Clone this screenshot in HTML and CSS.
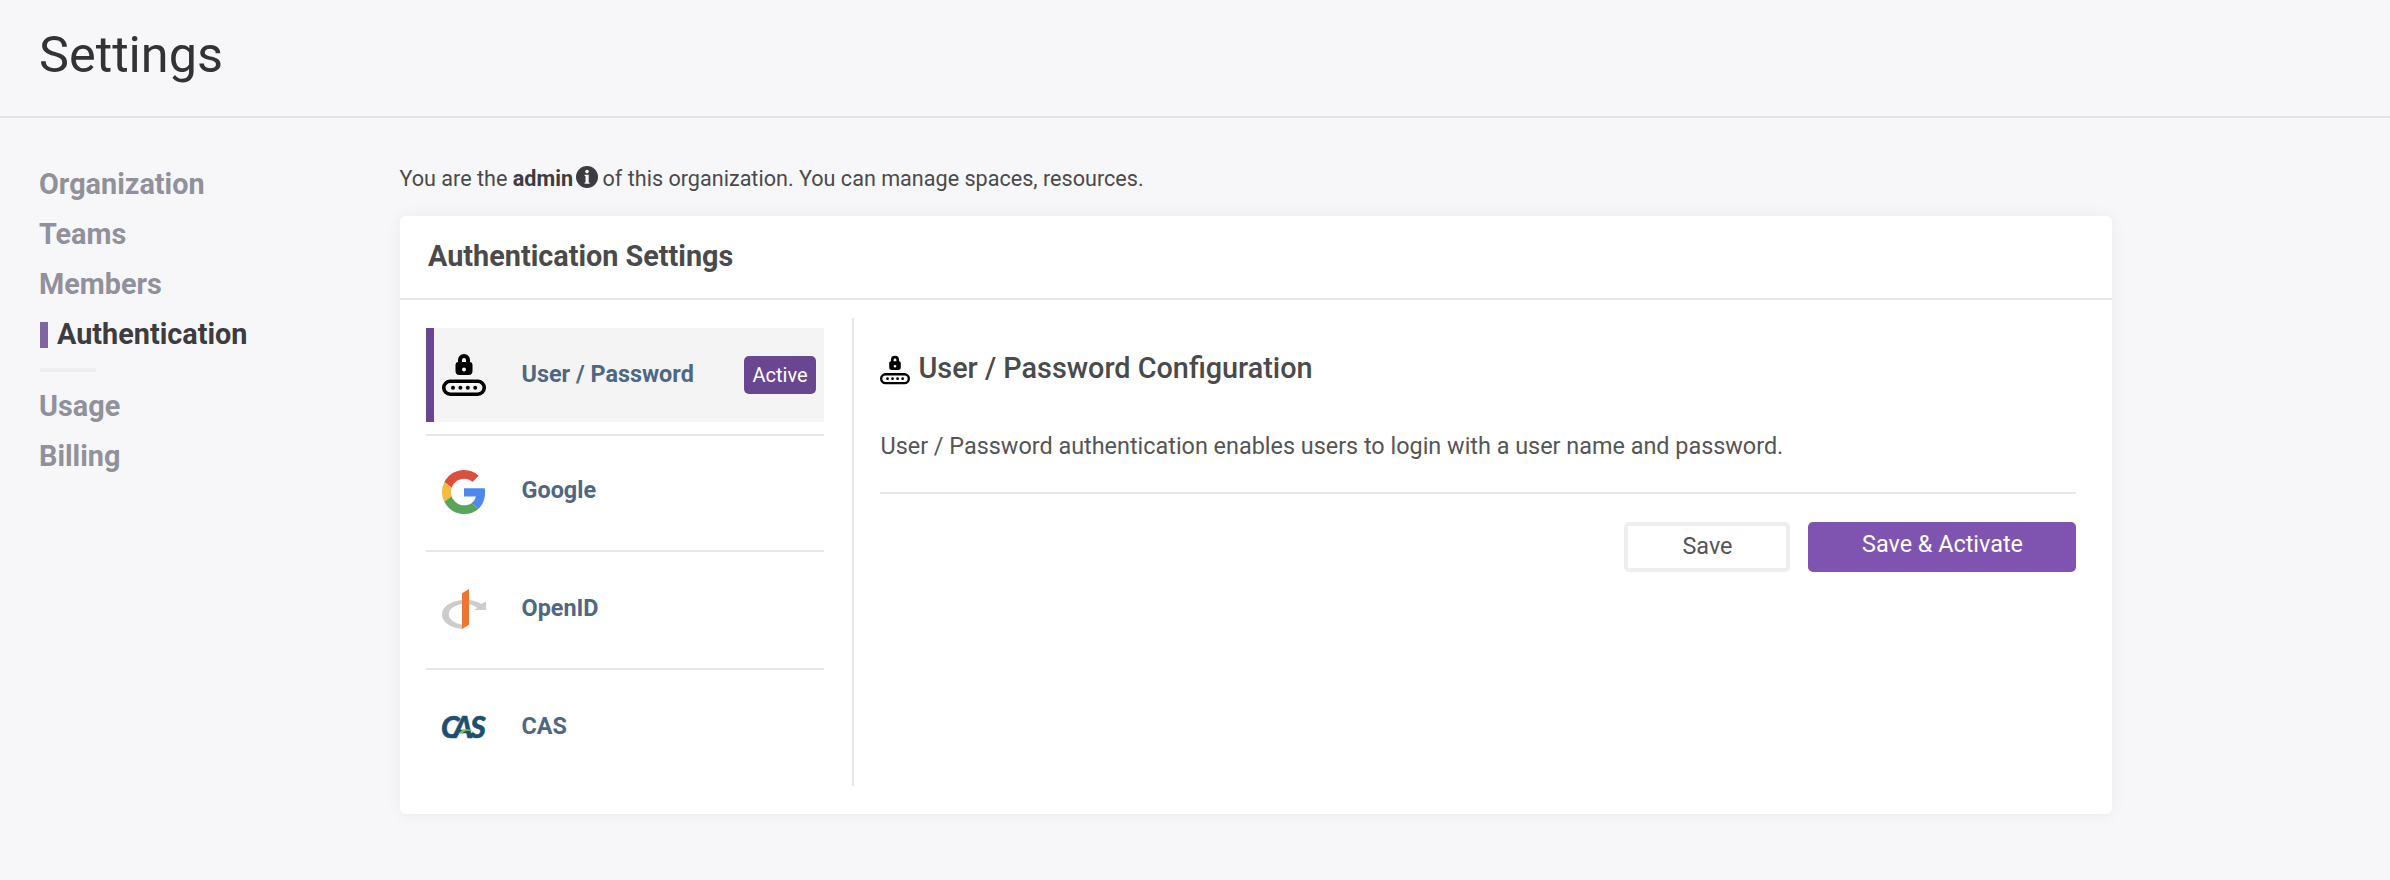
FILE: index.html
```html
<!DOCTYPE html>
<html lang="en">
<head>
<meta charset="utf-8">
<title>Settings</title>
<link rel="stylesheet" href="styles.css">
</head>
<body>
<svg width="0" height="0" class="defs" aria-hidden="true">
  <symbol id="lock" viewBox="0 0 44 44">
    <path fill-rule="evenodd" d="M16 9V7a6 6 0 0 1 12 0v2a2.700 2.700 0 0 1 2.500 2.700V18a4 4 0 0 1-4 4h-9a4 4 0 0 1-4-4v-6.300A2.700 2.700 0 0 1 16 9Zm4 0h4V7a2 2 0 0 0-4 0ZM22 14.500a2 2 0 1 0 0 4a2 2 0 1 0 0-4Z"/>
    <rect x="1.750" y="28.250" width="40.500" height="13" rx="6.500" fill="none" stroke="#000" stroke-width="3.500"/>
    <circle cx="11" cy="34.700" r="2"/><circle cx="18.400" cy="34.700" r="2"/><circle cx="25.800" cy="34.700" r="2"/><circle cx="33.200" cy="34.700" r="2"/>
  </symbol>
</svg>
<header class="top"><h1 class="top-title">Settings</h1></header>
<div class="page">
  <nav class="side">
    <a class="side-link">Organization</a>
    <a class="side-link">Teams</a>
    <a class="side-link">Members</a>
    <a class="side-link current">Authentication</a>
    <div class="side-rule"></div>
    <a class="side-link">Usage</a>
    <a class="side-link">Billing</a>
  </nav>
  <main class="main">
    <p class="intro"><span>You are the <b>admin</b></span><svg class="info" viewBox="0 0 22 22"><circle cx="11" cy="11" r="11" fill="#3c3c41"/><circle cx="11" cy="5.600" r="1.800" fill="#f7f7fa"/><path d="M8.600 8.700h4.100v7.800h.9v1.300H8.600v-1.300h.9v-6.500h-.9z" fill="#f7f7fa"/></svg><span>of this organization. You can manage spaces, resources.</span></p>
    <section class="card">
      <h2 class="card-title">Authentication Settings</h2>
      <div class="card-body">
        <div class="methods">
          <div class="method active"><svg class="logo"><use href="#lock"/></svg><span class="name">User / Password</span><span class="badge">Active</span></div>
          <div class="method google"><svg class="logo" viewBox="0 0 48 48"><path fill="#db4f3f" d="M24 9.500c3.540 0 6.710 1.220 9.210 3.600l6.850-6.850C35.900 2.380 30.470 0 24 0 14.620 0 6.510 5.380 2.560 13.220l7.980 6.190C12.430 13.720 17.740 9.500 24 9.500z"/><path fill="#4f87ed" d="M46.980 24.550c0-1.570-.15-3.090-.38-4.550H24v9.020h12.940c-.58 2.960-2.260 5.480-4.780 7.180l7.730 6c4.510-4.180 7.090-10.360 7.090-17.650z"/><path fill="#f3bb41" d="M10.530 28.590A14.500 14.500 0 0 1 9.770 24c0-1.600.27-3.140.76-4.590l-7.980-6.190A23.940 23.940 0 0 0 0 24c0 3.880.92 7.540 2.560 10.780l7.970-6.190z"/><path fill="#57a55b" d="M24 48c6.480 0 11.930-2.130 15.890-5.810l-7.730-6c-2.150 1.450-4.920 2.300-8.160 2.300-6.260 0-11.570-4.220-13.470-9.910l-7.980 6.190C6.510 42.620 14.620 48 24 48z"/></svg><span class="name">Google</span></div>
          <div class="method openid"><svg class="logo" viewBox="0 0 44 44"><path fill="#ccc" d="M20 13v4C12 18.300 6.800 22.200 6.800 27.200S12.300 36.200 20 37.700V42C8 40.800 0 34.900 0 27.500S8 14.200 20 13ZM27 13c4.800.6 9 1.900 12.300 3.900L44 14.500V23H32l3.300-1.900C33 19 30 17.700 27 17.200Z"/><path fill="#f07432" d="M20 6.200 27 2v35.800L20 42z"/></svg><span class="name">OpenID</span></div>
          <div class="method cas"><svg class="logo" viewBox="0 0 44 44"><text class="cas-text" x="-1 11.300 28.200" y="32.800">CAS</text><path d="M17 28.300c3.200-4.600 9-5.400 15-1.500-5.200-1.700-8.500-1.400-11 .6l.2 1.500z" fill="#85bf5c"/></svg><span class="name">CAS</span></div>
        </div>
        <div class="config">
          <h3 class="config-title"><svg class="config-icon"><use href="#lock"/></svg>User / Password Configuration</h3>
          <p class="config-text">User / Password authentication enables users to login with a user name and password.</p>
          <div class="actions"><button class="btn save">Save</button><button class="btn activate">Save &amp; Activate</button></div>
        </div>
      </div>
    </section>
  </main>
</div>
</body>
</html>
```
FILE: styles.css
```css
* { box-sizing: border-box; margin: 0; padding: 0; }
body { background: #f7f7fa; font-family: Roboto, "Liberation Sans", sans-serif; color: #4a4a4a; min-height: 880px; }
.defs { position: absolute; }
.top { height: 118px; border-bottom: 2px solid #e4e4e8; padding: 25px 39px 0; }
.top-title { font-size: 50.4px; font-weight: 400; line-height: 59px; color: #333; }
.page { display: flex; }
.side { width: 400px; padding: 41px 39px 0; display: flex; flex-direction: column; }
.side-link { font-size: 28.8px; font-weight: 700; line-height: 50px; color: #91919c; display: flex; align-items: center; }
.side-link.current { color: #3c3c41; }
.side-link.current::before { content: ""; width: 8px; height: 26px; background: #8065a3; margin: 2px 9px 0 1px; }
.side-rule { width: 56px; height: 4px; background: #eee; margin: 9px 0 9px 1px; }
.main { width: 1712px; padding-top: 46px; }
.intro { height: 30px; line-height: 29px; font-size: 21.6px; display: flex; white-space: pre; margin-left: -0.5px; }
.intro b { color: #3c3c41; }
.info { width: 22px; height: 22px; margin: 2px 5px 0 2.500px; flex: none; }
.card { margin-top: 22px; height: 598px; background: #fff; border-radius: 6px; box-shadow: 0 0 16px rgba(0,0,0,.06); }
.card-title { height: 84px; border-bottom: 2px solid #e6e6eb; padding: 15px 28px 0; font-size: 28.8px; line-height: 50px; font-weight: 700; }
.card-body { display: flex; padding: 18px 36px 0 26px; }
.methods { width: 428px; height: 468px; padding: 10px 28px 0 0; border-right: 2px solid #e6e6eb; }
.method { display: flex; align-items: center; height: 118px; padding: 0 0 2px 16px; border-top: 2px solid #e6e6eb; }
.method.active { height: 94px; background: #f4f4f4; border-top: 0; border-left: 8px solid #694691; padding: 0 8px; margin-bottom: 12px; }
.method.google { height: 116px; }
.logo { width: 44px; height: 44px; flex: none; overflow: visible; }
.name { margin-left: 35.5px; font-size: 23.4px; font-weight: 700; line-height: 30px; color: #506784; flex: 1; padding-bottom: 2px; }
.google .name { padding-bottom: 4px; }
.badge { width: 72px; height: 38px; border-radius: 5px; background: #694691; color: #fff; font-size: 20px; line-height: 38px; text-align: center; }
.cas-text { font: italic 900 30px Lato, sans-serif; fill: #1d4f6e; stroke: #1d4f6e; stroke-width: .5px; }
.config { flex: 1; padding: 25px 0 0 26px; }
.config-title { display: flex; align-items: center; height: 50px; font-size: 28.8px; font-weight: 500; line-height: 50px; }
.config-icon { width: 30px; height: 30px; margin: 3px 8.500px 0 0; }
.config-text { margin-top: 38px; height: 63px; border-bottom: 2px solid #e6e6eb; font-size: 23.4px; line-height: 30px; color: #555; text-indent: .5px; }
.actions { display: flex; justify-content: flex-end; gap: 18px; margin-top: 28px; }
.btn { height: 50px; border: 0; border-radius: 5px; font: 400 23.4px/28px Roboto, sans-serif; }
.save { width: 166px; background: #fff; border: 4px solid #eee; color: #555; padding: 0 0 2px 1px; }
.activate { width: 268px; background: #7f54b0; color: #fff; padding: 0 0 6px 1px; }
```
